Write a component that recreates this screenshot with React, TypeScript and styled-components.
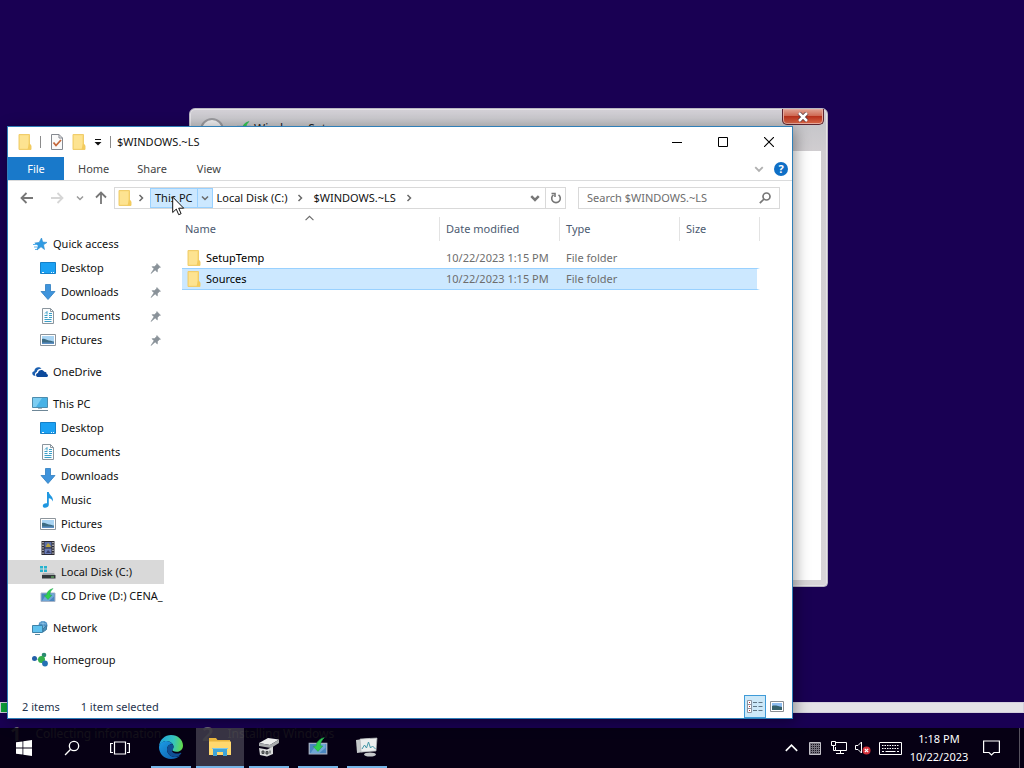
import React from "react";
import styled, { createGlobalStyle, css } from "styled-components";

const GlobalStyle = createGlobalStyle`
  *, *::before, *::after { box-sizing: border-box; }
  html, body, #root { height: 100%; margin: 0; }
  body { overflow: hidden; }
  body, button, input, table { font-family: "Noto Sans", "Open Sans", sans-serif; font-size: 11px; line-height: 16px; }
  button { border: 0; padding: 0; margin: 0; background: none; color: inherit; }
  svg { display: block; flex: none; }
`;

/* ---------- Desktop ---------- */

const Desktop = styled.main`
  position: relative;
  height: 100vh;
  min-height: 600px;
  overflow: hidden;
  background: #190053;
  color: #111;
`;

const Progress = styled.div`
  position: absolute;
  left: 0;
  right: 0;
  bottom: 55px;
  height: 11px;
  border: 1px solid #d4cfdc;
  background: #e4e2e6;
`;

const ProgressDone = styled.div`
  width: 8px;
  height: 100%;
  background: #0ea53a;
`;

const Stages = styled.div`
  position: absolute;
  left: 10px;
  bottom: 22px;
  display: flex;
  gap: 40px;
  color: #6c6878;
`;

const Stage = styled.div`
  display: flex;
  align-items: center;
  gap: 14px;
  min-width: 152px;
  font-size: 12px;
  line-height: 24px;
  white-space: nowrap;
  b { font-size: 20px; }
`;

/* ---------- Setup window ---------- */

const SetupWindow = styled.section`
  position: absolute;
  inset: 108px 196px 181px 189px;
  display: flex;
  flex-direction: column;
  padding: 0 6px 6px;
  border: 1px solid #b9b6c2;
  border-radius: 6px 6px 4px 4px;
  background: linear-gradient(#d3d0d6, #c6c6ca 14px, #d0cdd0 42px, #d8d5d8);
  box-shadow: inset 0 0 0 1px #e4e2e6;
`;

const SetupTitle = styled.header`
  display: flex;
  align-items: flex-start;
  flex: none;
  height: 42px;
  color: #222;
`;

const SetupBack = styled.span`
  width: 24px;
  height: 24px;
  margin: 9px 12px 0 4px;
  border: 2px solid #9a9a9e;
  border-radius: 50%;
  background: #ececee;
`;

const SetupName = styled.span`
  display: flex;
  flex: 1;
  gap: 2px;
  padding-top: 12px;
  font-size: 12px;
`;

const SetupClose = styled.button`
  display: grid;
  place-items: center;
  width: 42px;
  height: 16px;
  margin-right: -3px;
  border: 1px solid #5c2430;
  border-top: 0;
  border-radius: 0 0 5px 5px;
  background: linear-gradient(#e0a394, #cf6a54 45%, #b8321c 50%, #d8694a);
  box-shadow: inset 0 0 0 1px #e6a99c;
`;

const SetupBody = styled.div`
  flex: 1;
  background: #fff;
`;

/* ---------- Explorer window ---------- */

const Explorer = styled.section`
  position: absolute;
  inset: 126px 231px 49px 7px;
  display: flex;
  flex-direction: column;
  border: 1px solid #2f7fb8;
  background: #fff;
  box-shadow: 2px 3px 14px rgba(0, 0, 0, 0.4);
`;

const TitleBar = styled.header`
  display: flex;
  align-items: center;
  flex: none;
  height: 30px;
  padding-left: 10px;
`;

const QuickTools = styled.div`
  display: flex;
  align-items: center;
  gap: 8px;
`;

const ToolButton = styled.button`
  display: grid;
  place-items: center;
`;

const Divider = styled.span`
  width: 1px;
  height: 12px;
  margin-right: 1px;
  background: #8b8b8b;
`;

const WindowTitle = styled.h1`
  flex: 1;
  margin: 0 0 0 5px;
  font-size: 11px;
  font-weight: 400;
`;

const WindowButton = styled.button`
  display: grid;
  place-items: center;
  width: 46px;
  height: 30px;
`;

const Ribbon = styled.nav`
  display: flex;
  flex: none;
  height: 24px;
  border-bottom: 1px solid #dadbdc;
`;

const RibbonTab = styled.button<{ $file?: boolean }>`
  padding: 0 14px;
  min-width: 56px;
  color: ${(p) => (p.$file ? "#fff" : "#444")};
  background: ${(p) => (p.$file ? "#1979ca" : "transparent")};
`;

const RibbonEnd = styled.div`
  display: flex;
  align-items: center;
  gap: 10px;
  margin-left: auto;
  padding-right: 4px;
`;

const Help = styled.button`
  width: 14px;
  height: 14px;
  border-radius: 50%;
  background: #0f6fc6;
  color: #fff;
  font-weight: 700;
  line-height: 14px;
`;

const AddressRow = styled.div`
  display: flex;
  align-items: center;
  flex: none;
  height: 34px;
  padding: 0 12px 0 12px;
`;

const NavButtons = styled.div`
  display: grid;
  grid-template-columns: 21px 32px 14px 27px;
  align-items: center;
  justify-items: center;
  button:first-child { justify-self: start; }
`;

const AddressBar = styled.div`
  display: flex;
  flex: 1;
  height: 22px;
  border: 1px solid #d9d9d9;
`;

const Crumbs = styled.div`
  display: flex;
  align-items: center;
  flex: 1;
  padding-left: 3px;
`;

const Crumb = styled.button<{ $hot?: boolean }>`
  height: 20px;
  padding: 0 4px;
  white-space: nowrap;
  ${(p) =>
    p.$hot &&
    css`
      border: 1px solid #99d1ff;
      background: #cce8ff;
    `}
`;

const CrumbArrow = styled.button<{ $hot?: boolean }>`
  display: grid;
  place-items: center;
  width: ${(p) => (p.$hot ? 15 : 18)}px;
  height: 20px;
  ${(p) =>
    p.$hot &&
    css`
      border: 1px solid #99d1ff;
      border-left: 0;
      background: #cce8ff;
    `}
`;

const AddressButton = styled.button<{ $line?: boolean }>`
  display: grid;
  place-items: center;
  width: 20px;
  border-left: ${(p) => (p.$line ? "1px solid #d9d9d9" : "0")};
`;

const Search = styled.label`
  display: flex;
  align-items: center;
  width: 202px;
  height: 22px;
  margin-left: 12px;
  padding: 0 8px;
  border: 1px solid #d9d9d9;
  input {
    flex: 1;
    min-width: 0;
    padding: 0;
    border: 0;
    outline: 0;
    background: none;
  }
  input::placeholder { color: #6d6d6d; opacity: 1; }
`;

const Panes = styled.div`
  display: flex;
  flex: 1;
  min-height: 0;
`;

const Sidebar = styled.nav`
  flex: none;
  width: 156px;
  padding-top: 17px;
`;

const Group = styled.ul`
  margin: 0 0 8px;
  padding: 0;
  list-style: none;
`;

const Place = styled.a<{ $child?: boolean; $current?: boolean }>`
  display: flex;
  align-items: center;
  gap: 5px;
  height: 24px;
  padding-left: ${(p) => (p.$child ? 32 : 24)}px;
  background: ${(p) => (p.$current ? "#d9d9d9" : "transparent")};
  color: #111;
  text-decoration: none;
  white-space: nowrap;
`;

const PinSlot = styled.span`
  margin-left: auto;
  padding-right: 3px;
`;

const FilePane = styled.div`
  flex: 1;
  padding: 2px 0 0 18px;
`;

const Files = styled.table`
  width: 578px;
  table-layout: fixed;
  border-collapse: separate;
  border-spacing: 0;
  tbody::before { content: ""; display: block; height: 6px; }
`;

const HeadCell = styled.th<{ $width: number; $first?: boolean }>`
  position: relative;
  width: ${(p) => p.$width}px;
  height: 24px;
  padding: 0 0 0 ${(p) => (p.$first ? 3 : 6)}px;
  border-right: 1px solid #e3e3e3;
  color: #4c5a70;
  font-weight: 400;
  text-align: left;
`;

const SortMark = styled.span`
  position: absolute;
  top: -3px;
  left: 50%;
  margin-left: -6px;
`;

const FileRow = styled.tr<{ $selected?: boolean }>`
  td {
    height: 21px;
    padding: 0 0 0 6px;
    color: #6d6d6d;
    white-space: nowrap;
  }
  td:first-child { padding-left: 5px; color: #000; }
  ${(p) =>
    p.$selected &&
    css`
      td {
        height: 22px;
        border: 0 solid #99d1ff;
        border-width: 1px 0;
        background: #cce8ff;
      }
      td:last-child {
        border-right: 3px solid #fff;
        background-clip: padding-box;
      }
    `}
`;

const FileName = styled.span`
  display: flex;
  align-items: center;
  gap: 5px;
`;

const StatusBar = styled.footer`
  display: flex;
  align-items: center;
  flex: none;
  height: 23px;
  gap: 21px;
  padding-left: 14px;
  color: #26334d;
`;

const Views = styled.div`
  display: flex;
  align-items: center;
  margin-left: auto;
  padding-right: 4px;
`;

const ViewButton = styled.button<{ $on?: boolean }>`
  display: grid;
  place-items: center;
  width: 22px;
  height: 23px;
  ${(p) =>
    p.$on &&
    css`
      border: 1px solid #3f9bd8;
      background: #cce8f8;
    `}
`;

/* ---------- Taskbar ---------- */

const Taskbar = styled.footer`
  position: absolute;
  left: 0;
  right: 0;
  bottom: 0;
  display: flex;
  height: 40px;
  background: rgba(2, 0, 8, 0.84);
  color: #fff;
`;

const TaskButton = styled.button`
  display: grid;
  place-items: center;
  width: 48px;
  height: 40px;
`;

const Apps = styled.div`
  display: flex;
  gap: 1px;
  margin-left: 3px;
`;

const AppButton = styled(TaskButton)<{ $active?: boolean }>`
  background: ${(p) => (p.$active ? "rgba(255,255,255,0.2)" : "transparent")};
  grid-template-rows: 1fr 2px;
  &::after {
    content: "";
    width: ${(p) => (p.$active ? 48 : 40)}px;
    height: 2px;
    background: #76b5e8;
  }
`;

const Tray = styled.div`
  display: flex;
  align-items: center;
  margin-left: auto;
  border-right: 1px solid #56525e;
  margin-right: 4px;
`;

const TrayButton = styled.button<{ $wide?: boolean }>`
  display: grid;
  place-items: center;
  width: ${(p) => (p.$wide ? 30 : 24)}px;
  height: 40px;
`;

const Clock = styled.button`
  width: 68px;
  line-height: 18px;
  text-align: center;
`;

const Notices = styled(TrayButton)`
  width: 36px;
  margin-right: 10px;
`;

const Pointer = styled.span`
  position: absolute;
  left: 172px;
  top: 196px;
`;

/* ---------- Icons ---------- */

const FolderIcon = () => (
  <svg width="14" height="16" viewBox="0 0 14 16">
    <path d="M1 .5h10.500v10l1.500 1v4H1z" fill="#fbdc7c" stroke="#f0cd6c" />
    <path d="M2 1.500h8v13H2z" fill="#fde391" />
    <path d="M11 9.500l2 1.500v4.500H9.500z" fill="#f3cb5d" />
  </svg>
);

const CheckPageIcon = () => (
  <svg width="14" height="16" viewBox="0 0 14 16" fill="none">
    <path d="M1.500.5h7.500l3.500 3.500v11.500h-11z" fill="#fafafa" stroke="#858990" />
    <path d="M9 .5V4h3.500" stroke="#858990" />
    <path d="M3.500 8.500l2.500 3 5-5.500" stroke="#c4673a" strokeWidth="1.800" />
  </svg>
);

const MenuMark = () => (
  <svg width="8" height="8" viewBox="0 0 8 8">
    <path d="M1 1.500h6" stroke="#111" />
    <path d="M.5 4h7L4 7.500z" fill="#111" />
  </svg>
);

const Chevron = ({ dir = "right", color = "#6a6a6a", size = 8, weight = 1.5 }: { dir?: string; color?: string; size?: number; weight?: number }) => {
  const paths: Record<string, string> = {
    right: "M2.500 1l3 3-3 3",
    down: "M1 2.500l3 3 3-3",
    up: "M.5 5.500L4 2l3.500 3.500",
  };
  return (
    <svg width={size} height={size} viewBox="0 0 8 8" fill="none" stroke={color} strokeWidth={weight}>
      <path d={paths[dir]} />
    </svg>
  );
};

const Arrow = ({ turn = 0, color = "#777" }: { turn?: number; color?: string }) => (
  <svg width="14" height="14" viewBox="0 0 14 14" fill="none" stroke={color} strokeWidth="1.800">
    <g transform={`rotate(${turn} 7 7)`}>
      <path d="M1.500 7H13M6.500 2l-5 5 5 5" />
    </g>
  </svg>
);

const RefreshIcon = () => (
  <svg width="12" height="12" viewBox="0 0 12 12" fill="none" stroke="#777" strokeWidth="1.600">
    <path d="M8.500 2.800A4.300 4.300 0 1 1 3.500 2.800" />
    <path d="M1.500 1.500H5v3.500" />
  </svg>
);

const GlassIcon = ({ color = "#777", size = 12, weight = 1.7 }: { color?: string; size?: number; weight?: number }) => (
  <svg width={size} height={size} viewBox="0 0 12 12" fill="none" stroke={color} strokeWidth={weight}>
    <circle cx="7.500" cy="4.500" r="3.500" />
    <path d="M5 7L.8 11.200" />
  </svg>
);

const StarIcon = () => (
  <svg width="16" height="16" viewBox="0 0 16 16">
    <path d="M9.500 2l1.200 4 4.300.4-3.500 2.400 1 4.700L9 10.800 5 14l1.200-4.600L2.800 7l4.400-.6z" fill="#2f9be3" stroke="#2a8ace" strokeWidth=".6" />
    <path d="M1 8.500h4M2 11h3M3 13.500h2" stroke="#5ab4ee" />
  </svg>
);

const DesktopIcon = () => (
  <svg width="16" height="16" viewBox="0 0 16 16">
    <path d="M.5 2.500h15v11H.5z" fill="#1ba1f3" stroke="#1580c8" />
    <path d="M2 12.500h2M11 12.500h1M13 12.500h1" stroke="#e6f5ff" />
  </svg>
);

const DownloadIcon = () => (
  <svg width="16" height="16" viewBox="0 0 16 16">
    <path d="M5.500 .5h5v7h4.500L8 15.500 1 7.500h4.500z" fill="#3f94dc" stroke="#2f7dc0" strokeWidth=".8" />
  </svg>
);

const DocumentIcon = () => (
  <svg width="16" height="16" viewBox="0 0 16 16" fill="none">
    <path d="M2.500.5h8l3 3v12h-11z" fill="#fbfcfd" stroke="#8b969e" />
    <path d="M10.500.5v3h3" stroke="#8b969e" />
    <path d="M4.500 7.500h3M9 5.500h3M9 7.500h3M4.500 9.500h3M9 9.500h3M4.500 11.500h7M4.500 13.500h7M5 5.500l2-2v3" stroke="#3b9fc7" />
  </svg>
);

const PictureIcon = () => (
  <svg width="16" height="16" viewBox="0 0 16 16">
    <path d="M.5 2.500h15v11H.5z" fill="#fff" stroke="#8d959c" />
    <path d="M2 4h12v8H2z" fill="#a9d4f3" />
    <path d="M2 7c3-1 4 1 7 1.500s4 1 5 1V12H2z" fill="#3d6c84" />
    <path d="M2 10.500h12V12H2z" fill="#5b8fc4" />
  </svg>
);

const CloudIcon = () => (
  <svg width="16" height="16" viewBox="0 0 16 16">
    <path d="M1.500 11.500C-.5 10 0 7.500 2.300 7.200 2.500 3.500 7 2 9.500 4.800 6.500 4.500 5 6.200 4.800 8 3 8.500 2.500 10.500 3.500 12z" fill="#1b5fb0" />
    <path d="M5.500 13C3.500 12.500 3.500 9.200 6 9c.3-3.200 4.800-4 6.200-1.200 1.800-.2 2.600 1 2.400 2.200 1.800.4 1.800 2.600.2 3z" fill="#0d4a9c" />
  </svg>
);

const PcIcon = () => (
  <svg width="16" height="16" viewBox="0 0 16 16">
    <path d="M.5 1.500h15v10H.5z" fill="#48b2e6" stroke="#4d8cad" />
    <path d="M1 2h9L4 11H1z" fill="#7ccdf2" />
    <path d="M0 14.500h16" stroke="#6e8797" />
    <path d="M6 12h4v1H6z" fill="#a5b5bf" />
  </svg>
);

const MusicIcon = () => (
  <svg width="16" height="16" viewBox="0 0 16 16">
    <path d="M7 0h1.800c.3 3.500 5 4 4 9.500-.5-2-2-3-4-3.200V13c-.3 2.800-5.300 3.800-6 1.200-.3-2.300 2.200-3.300 4.200-2.900z" fill="#1f97e0" />
  </svg>
);

const VideoIcon = () => (
  <svg width="16" height="16" viewBox="0 0 16 16">
    <path d="M1.500 1h13v14h-13z" fill="#2b2b33" />
    <path d="M4.500 2h7v5.500h-7z" fill="#5b6fa8" />
    <path d="M4.500 8.500h7V14h-7z" fill="#6a7bb5" />
    <path d="M6 6l2-3 2 2 1 2H6z" fill="#b8a23d" />
    <path d="M6 13l2-3 3 3z" fill="#39406b" />
    <path d="M3 2v13M13 2v13" stroke="#e8e8e8" strokeWidth="1.200" strokeDasharray="1.300 1.300" />
  </svg>
);

const DiskIcon = () => (
  <svg width="16" height="16" viewBox="0 0 16 16">
    <path d="M0 2h3v2.500H0zM4 2h3v2.500H4zM0 5.500h3V8H0zM4 5.500h3V8H4z" fill="#25b3cf" />
    <path d="M3 9h11l1 2H2z" fill="#a9adb0" />
    <path d="M2 11h13.500v3.500H2z" fill="#33383b" />
    <path d="M11 13h3" stroke="#6fcf6a" />
  </svg>
);

const SetupDiscIcon = ({ size = 16 }: { size?: number }) => (
  <svg width={size} height={size} viewBox="0 0 16 16">
    <path d="M1 5h14v8.500H1z" fill="#4a86c0" stroke="#a6b4c8" />
    <path d="M2 13l5-7.500h7v3L9 13z" fill="#6fa6d6" />
    <path d="M8 11.500L4.200 7.500l2.300-.2C6.800 4 9 1.500 13 .5 10.800 2.500 10 4.500 9.800 7l2 .2z" fill="#2fd04c" stroke="#22a850" strokeWidth=".5" />
  </svg>
);

const NetworkIcon = () => (
  <svg width="16" height="16" viewBox="0 0 16 16">
    <circle cx="11" cy="5.500" r="4.500" fill="#4b8fc4" />
    <path d="M8 3l6 1M8 7h7M11 1v8" stroke="#93c6e6" strokeWidth=".8" />
    <path d="M11 9l3.500-3.500v4L11 12z" stroke="#3f7ba0" fill="#4b8fb8" />
    <path d="M.5 5.500h10v7H.5z" fill="#5fc1ee" stroke="#3f83a8" />
    <path d="M3 14.500h5" stroke="#56889f" />
  </svg>
);

const HomegroupIcon = () => (
  <svg width="16" height="16" viewBox="0 0 16 16">
    <path d="M2.500 6.500l6 1.500 3-5M8.500 8l4 3.500" stroke="#8cc6a8" fill="none" />
    <circle cx="2.500" cy="6.500" r="2.500" fill="#2460a8" />
    <circle cx="12" cy="3" r="2.300" fill="#2c8a72" />
    <circle cx="9.500" cy="7.500" r="3.500" fill="#35b04a" />
    <circle cx="13" cy="11.500" r="2.900" fill="#2472b4" />
  </svg>
);

const PinIcon = () => (
  <svg width="11" height="11" viewBox="0 0 11 11">
    <path d="M6.800.5l3.700 3.700-1.200.3-1.800 1.900-.2 2.600L5.200 7 1 10.500 4 5.800 2 3.700l2.600-.2L6.500 1.700z" fill="#8a9299" stroke="#8a9299" strokeWidth=".6" />
  </svg>
);

const DetailsIcon = () => (
  <svg width="16" height="14" viewBox="0 0 16 14" fill="none">
    <path d="M.5.500h4v12h-4zM.5 4.500h4M.5 8.500h4" fill="#fff" stroke="#8c93a0" />
    <path d="M2 2.500h1M2 6.500h1M2 10.500h1" stroke="#b33" />
    <path d="M6 2.500h4M11.500 2.500h4M6 6.500h4M11.500 6.500h4M6 10.500h4M11.500 10.500h4" stroke="#5f7686" />
  </svg>
);

const ThumbIcon = () => (
  <svg width="14" height="12" viewBox="0 0 14 12">
    <path d="M.5.500h13v10H.5z" fill="#fff" stroke="#8b8f94" />
    <path d="M2 2h10v7H2z" fill="#8fbdf0" />
    <path d="M2 5c3-1 6 0 10 1v3H2z" fill="#35606a" />
  </svg>
);

const StartIcon = () => (
  <svg width="16" height="16" viewBox="0 0 16 16" fill="#fff">
    <path d="M0 2.300L6.500 1.400v6.200H0zM7.300 1.300L16 0v7.600H7.300zM0 8.400h6.500v6.200L0 13.700zM7.300 8.400H16V16l-8.700-1.300z" />
  </svg>
);

const TaskViewIcon = () => (
  <svg width="20" height="16" viewBox="0 0 20 16" fill="none" stroke="#fff" strokeWidth="1.200">
    <path d="M4.500 2h11v12h-11zM3 3.500H.6v9H3M17 3.500h2.400v9H17" />
  </svg>
);

const EdgeIcon = () => (
  <svg width="24" height="24" viewBox="0 0 24 24">
    <defs>
      <linearGradient id="edge-top" x1="0" x2="1" y1=".3" y2=".4">
        <stop offset="0" stopColor="#1fa0dc" />
        <stop offset=".6" stopColor="#35c3c0" />
        <stop offset="1" stopColor="#62d94c" />
      </linearGradient>
      <linearGradient id="edge-low" x1="0" x2="1" y1="0" y2="1">
        <stop offset="0" stopColor="#1c9de6" />
        <stop offset="1" stopColor="#0c59a8" />
      </linearGradient>
    </defs>
    <path d="M0 11.500C.5 4.500 6 0 12 0c7 0 12 5 12 10.500 0 4-3 6.300-6.500 6.300-3 0-4.300-1-4.300-1.700s1.300-1.300 1.300-3.300C14.500 8.500 11 6 7.500 6 4 6 1 8.500 0 11.500z" fill="url(#edge-top)" />
    <path d="M0 12C.5 8.200 4 6 7.500 6c2.800 0 5.200 1.600 6.200 3.500C11 8.500 8 11 8 14.500c0 4.500 4 7.500 8 7.500 2 0 4-.8 5.500-1.800C19.500 22.500 16 24 12 24 5 24 0 18.500 0 12z" fill="url(#edge-low)" />
    <path d="M13.700 9.500C11 8.500 8 11 8 14.500c0 4.500 4 7.500 8 7.500 2.500 0 5-1.500 6.300-3.700.3-.5-.1-.8-.6-.6-4.200 2-9.500.4-8.500-2.600.3-.6 1.300-1.300 1.300-3.300 0-.8-.3-1.600-.8-2.300z" fill="#0f4f95" />
  </svg>
);

const ExplorerIcon = () => (
  <svg width="22" height="20" viewBox="0 0 22 20">
    <path d="M0 1h7l1.500 2H21v5H0z" fill="#e8b43c" />
    <path d="M0 4.500h22V18H0z" fill="#ffd86e" />
    <path d="M4 11h14v8h-4v-4H8v4H4z" fill="#3fa4d8" />
    <path d="M3 11.500h16" stroke="#7cc8ea" />
  </svg>
);

const PrinterIcon = () => (
  <svg width="22" height="20" viewBox="0 0 22 20">
    <path d="M1 6l9-5 11 1.500L12 8z" fill="#eceded" />
    <path d="M1 6l11 2 9-5.500V6l-8 5L1 9z" fill="#a8abad" />
    <path d="M1 11l8 1.500 6-3V17l-6 2.500L2 18z" fill="#d9dadb" />
    <path d="M4 14h2v2.500H4zM8 14.500h2V17H8zM12 13.500v3" stroke="#44484b" fill="#777" />
  </svg>
);

const MonitorAppIcon = () => (
  <svg width="24" height="20" viewBox="0 0 24 20">
    <path d="M1 3l14-2 1 13-14 2z" fill="#c4c8ca" />
    <path d="M5 2l17-1-1 13-15 1z" fill="#eceeee" stroke="#aeb2b5" strokeWidth=".7" />
    <path d="M7 12l2.500-4 2 3 2-6 2 6 2-2 3 3" stroke="#4297a8" fill="none" />
    <ellipse cx="15" cy="17.500" rx="6" ry="2" fill="#c6c9cb" />
  </svg>
);

const ChipIcon = () => (
  <svg width="12" height="13" viewBox="0 0 12 13">
    <path d="M.5.500h11v12H.5z" fill="#77747f" stroke="#c3c1c8" />
    <path d="M2 2.500h9M2 4.500h9M2 6.500h9M2 8.500h9M2 10.500h9" stroke="#17141f" strokeDasharray="1 1" />
  </svg>
);

const WiredIcon = () => (
  <svg width="16" height="14" viewBox="0 0 16 14" fill="none" stroke="#fff">
    <path d="M5 1.500h10.500v8H4.500V6M5 12.500h8M9.500 9.500v3M.5 .5h4v4h-4zM2.500 4.500v5h2" />
  </svg>
);

const MuteIcon = () => (
  <svg width="16" height="16" viewBox="0 0 16 16" fill="none">
    <path d="M.5 5.500h2.500l3.500-3.500v11L3 9.500H.5z" stroke="#fff" />
    <circle cx="11.500" cy="10.500" r="4" fill="#d5303a" />
    <path d="M9.800 8.800l3.400 3.400M13.200 8.800l-3.400 3.400" stroke="#fff" strokeWidth="1.200" />
  </svg>
);

const KeyboardIcon = () => (
  <svg width="23" height="13" viewBox="0 0 23 13" fill="none" stroke="#fff">
    <path d="M.5.500h22v12H.5z" />
    <path d="M3 3.500h17M3 6.500h17" strokeDasharray="1.500 1" />
    <path d="M3 9.500h2M6.500 9.500h10M18 9.500h2" />
  </svg>
);

const NoticeIcon = () => (
  <svg width="17" height="16" viewBox="0 0 17 16" fill="none" stroke="#fff" strokeWidth="1.200">
    <path d="M.6 1h15.800v11.500h-5.400l-2.500 2.500L6 12.500H.6z" />
  </svg>
);

const PointerIcon = () => (
  <svg width="13" height="20" viewBox="0 0 13 20">
    <path d="M.7 1v15.500l3.600-3.400 2.400 5.600 2.400-1-2.400-5.500h5z" fill="#fff" stroke="#111" />
  </svg>
);

/* ---------- Data ---------- */

type PlaceItem = { label: string; icon: React.ReactNode; pinned?: boolean; current?: boolean };

const groups: { head: PlaceItem; items: PlaceItem[] }[] = [
  {
    head: { label: "Quick access", icon: <StarIcon /> },
    items: [
      { label: "Desktop", icon: <DesktopIcon />, pinned: true },
      { label: "Downloads", icon: <DownloadIcon />, pinned: true },
      { label: "Documents", icon: <DocumentIcon />, pinned: true },
      { label: "Pictures", icon: <PictureIcon />, pinned: true },
    ],
  },
  { head: { label: "OneDrive", icon: <CloudIcon /> }, items: [] },
  {
    head: { label: "This PC", icon: <PcIcon /> },
    items: [
      { label: "Desktop", icon: <DesktopIcon /> },
      { label: "Documents", icon: <DocumentIcon /> },
      { label: "Downloads", icon: <DownloadIcon /> },
      { label: "Music", icon: <MusicIcon /> },
      { label: "Pictures", icon: <PictureIcon /> },
      { label: "Videos", icon: <VideoIcon /> },
      { label: "Local Disk (C:)", icon: <DiskIcon />, current: true },
      { label: "CD Drive (D:) CENA_", icon: <SetupDiscIcon /> },
    ],
  },
  { head: { label: "Network", icon: <NetworkIcon /> }, items: [] },
  { head: { label: "Homegroup", icon: <HomegroupIcon /> }, items: [] },
];

const files = [
  { name: "SetupTemp", date: "10/22/2023 1:15 PM", type: "File folder", selected: false },
  { name: "Sources", date: "10/22/2023 1:15 PM", type: "File folder", selected: true },
];

const apps = [
  { label: "Microsoft Edge", icon: <EdgeIcon /> },
  { label: "File Explorer", icon: <ExplorerIcon />, active: true },
  { label: "Devices", icon: <PrinterIcon /> },
  { label: "Windows Setup", icon: <SetupDiscIcon size={20} /> },
  { label: "Task Manager", icon: <MonitorAppIcon /> },
];

const PlaceRow = ({ item, child }: { item: PlaceItem; child?: boolean }) => (
  <li>
    <Place href="#" $child={child} $current={item.current}>
      {item.icon}
      {item.label}
      {item.pinned && (
        <PinSlot>
          <PinIcon />
        </PinSlot>
      )}
    </Place>
  </li>
);

export default function App() {
  return (
    <Desktop>
      <GlobalStyle />
      <Progress>
        <ProgressDone />
      </Progress>
      <Stages>
        <Stage>
          <b>1</b>Collecting information
        </Stage>
        <Stage>
          <b>2</b>Installing Windows
        </Stage>
      </Stages>

      <SetupWindow>
        <SetupTitle>
          <SetupBack />
          <SetupName>
            <SetupDiscIcon />
            Windows Setup
          </SetupName>
          <SetupClose aria-label="Close setup">
            <svg width="12" height="10" viewBox="0 0 12 10">
              <path d="M2 1l8 8M10 1L2 9" stroke="#54343a" strokeWidth="4" />
              <path d="M2 1l8 8M10 1L2 9" stroke="#fff" strokeWidth="2.500" />
            </svg>
          </SetupClose>
        </SetupTitle>
        <SetupBody />
      </SetupWindow>

      <Explorer>
        <TitleBar>
          <QuickTools>
            <FolderIcon />
            <Divider />
            <ToolButton aria-label="Properties">
              <CheckPageIcon />
            </ToolButton>
            <ToolButton aria-label="New folder">
              <FolderIcon />
            </ToolButton>
            <ToolButton aria-label="Customize toolbar">
              <MenuMark />
            </ToolButton>
            <Divider />
          </QuickTools>
          <WindowTitle>$WINDOWS.~LS</WindowTitle>
          <WindowButton aria-label="Minimize">
            <svg width="10" height="10" viewBox="0 0 10 10" stroke="#000">
              <path d="M0 5.500h10" />
            </svg>
          </WindowButton>
          <WindowButton aria-label="Maximize">
            <svg width="10" height="10" viewBox="0 0 10 10" fill="none" stroke="#000">
              <path d="M.5.500h9v9h-9z" />
            </svg>
          </WindowButton>
          <WindowButton aria-label="Close">
            <svg width="10" height="10" viewBox="0 0 10 10" stroke="#000" strokeWidth="1.100">
              <path d="M0 0l10 10M10 0L0 10" />
            </svg>
          </WindowButton>
        </TitleBar>

        <Ribbon>
          <RibbonTab $file>File</RibbonTab>
          <RibbonTab>Home</RibbonTab>
          <RibbonTab>Share</RibbonTab>
          <RibbonTab>View</RibbonTab>
          <RibbonEnd>
            <ToolButton aria-label="Expand ribbon">
              <Chevron dir="down" color="#b0b0b0" size={10} />
            </ToolButton>
            <Help aria-label="Help">?</Help>
          </RibbonEnd>
        </Ribbon>

        <AddressRow>
          <NavButtons>
            <ToolButton aria-label="Back">
              <Arrow />
            </ToolButton>
            <ToolButton aria-label="Forward">
              <Arrow turn={180} color="#d6d6d6" />
            </ToolButton>
            <ToolButton aria-label="Recent locations">
              <Chevron dir="down" color="#999" />
            </ToolButton>
            <ToolButton aria-label="Up">
              <Arrow turn={90} />
            </ToolButton>
          </NavButtons>
          <AddressBar>
            <Crumbs>
              <FolderIcon />
              <CrumbArrow aria-label="Root">
                <Chevron />
              </CrumbArrow>
              <Crumb $hot>This PC</Crumb>
              <CrumbArrow $hot aria-label="Expand This PC">
                <Chevron dir="down" />
              </CrumbArrow>
              <Crumb>Local Disk (C:)</Crumb>
              <CrumbArrow aria-label="Expand Local Disk">
                <Chevron />
              </CrumbArrow>
              <Crumb>$WINDOWS.~LS</Crumb>
              <CrumbArrow aria-label="Expand folder">
                <Chevron />
              </CrumbArrow>
            </Crumbs>
            <AddressButton aria-label="Previous locations">
              <Chevron dir="down" color="#777" size={10} weight={2} />
            </AddressButton>
            <AddressButton $line aria-label="Refresh">
              <RefreshIcon />
            </AddressButton>
          </AddressBar>
          <Search>
            <input type="text" aria-label="Search" placeholder="Search $WINDOWS.~LS" />
            <GlassIcon />
          </Search>
        </AddressRow>

        <Panes>
          <Sidebar>
            {groups.map((g) => (
              <Group key={g.head.label}>
                <PlaceRow item={g.head} />
                {g.items.map((i) => (
                  <PlaceRow key={i.label} item={i} child />
                ))}
              </Group>
            ))}
          </Sidebar>
          <FilePane>
            <Files>
              <thead>
                <tr>
                  <HeadCell $width={258} $first>
                    Name
                    <SortMark>
                      <Chevron dir="up" size={9} weight={1} />
                    </SortMark>
                  </HeadCell>
                  <HeadCell $width={120}>Date modified</HeadCell>
                  <HeadCell $width={120}>Type</HeadCell>
                  <HeadCell $width={80}>Size</HeadCell>
                </tr>
              </thead>
              <tbody>
                {files.map((f) => (
                  <FileRow key={f.name} $selected={f.selected}>
                    <td>
                      <FileName>
                        <FolderIcon />
                        {f.name}
                      </FileName>
                    </td>
                    <td>{f.date}</td>
                    <td>{f.type}</td>
                    <td />
                  </FileRow>
                ))}
              </tbody>
            </Files>
          </FilePane>
        </Panes>

        <StatusBar>
          <span>2 items</span>
          <span>1 item selected</span>
          <Views>
            <ViewButton $on aria-label="Details view">
              <DetailsIcon />
            </ViewButton>
            <ViewButton aria-label="Thumbnail view">
              <ThumbIcon />
            </ViewButton>
          </Views>
        </StatusBar>
      </Explorer>

      <Taskbar>
        <TaskButton aria-label="Start">
          <StartIcon />
        </TaskButton>
        <TaskButton aria-label="Search Windows">
          <GlassIcon color="#fff" size={16} weight={1} />
        </TaskButton>
        <TaskButton aria-label="Task view">
          <TaskViewIcon />
        </TaskButton>
        <Apps>
          {apps.map((a) => (
            <AppButton key={a.label} aria-label={a.label} $active={a.active}>
              {a.icon}
            </AppButton>
          ))}
        </Apps>
        <Tray>
          <TrayButton aria-label="Show hidden icons">
            <Chevron dir="up" color="#fff" size={13} weight={1} />
          </TrayButton>
          <TrayButton aria-label="Device">
            <ChipIcon />
          </TrayButton>
          <TrayButton aria-label="Network status">
            <WiredIcon />
          </TrayButton>
          <TrayButton aria-label="Volume">
            <MuteIcon />
          </TrayButton>
          <TrayButton $wide aria-label="Touch keyboard">
            <KeyboardIcon />
          </TrayButton>
          <Clock>
            1:18 PM
            <br />
            10/22/2023
          </Clock>
          <Notices aria-label="Notifications">
            <NoticeIcon />
          </Notices>
        </Tray>
      </Taskbar>

      <Pointer>
        <PointerIcon />
      </Pointer>
    </Desktop>
  );
}
